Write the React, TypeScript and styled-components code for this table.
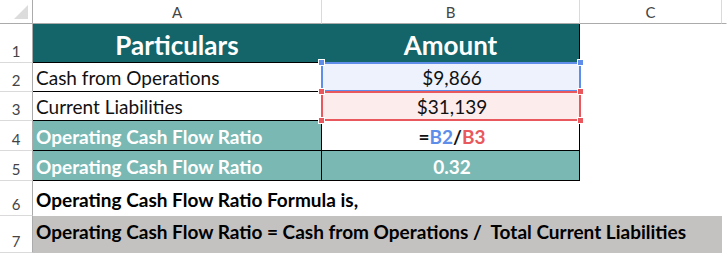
import { Fragment } from "react";
import styled, { createGlobalStyle } from "styled-components";

const GlobalStyle = createGlobalStyle`
  html, body {
    margin: 0;
    padding: 0;
    background: #ffffff;
  }
  body {
    font-family: Lato, "Liberation Sans", sans-serif;
  }
`;

const TEAL_DARK = "#136569";
const TEAL_LIGHT = "#7ab8b3";
const BLUE = "#5f8eea";
const RED = "#e8585c";

const Sheet = styled.div`
  position: relative;
  display: grid;
  grid-template-columns: 33px 289px 258px 142px 1fr;
  grid-template-rows: 24px 39px 29px 29px 30px 30px 35px 37px 1fr;
  width: 727px;
  height: 255px;
  overflow: hidden;
  background: #ffffff;
`;

const Corner = styled.div`
  position: relative;
  border-right: 1px solid #ababab;
  border-bottom: 1px solid #ababab;
  box-sizing: border-box;
  &::after {
    content: "";
    position: absolute;
    right: 4px;
    bottom: 4px;
    width: 0;
    height: 0;
    border-left: 14px solid transparent;
    border-bottom: 14px solid #dcdcdc;
  }
`;

const ColHead = styled.div<{ $last?: boolean }>`
  display: flex;
  align-items: center;
  justify-content: center;
  box-sizing: border-box;
  border-bottom: 1px solid #ababab;
  border-right: 1px solid ${(p) => (p.$last ? "#ffffff" : "#dadada")};
  font-size: 15px;
  color: #444444;
  padding-top: 1px;
`;

const RowHead = styled.div`
  display: flex;
  align-items: flex-end;
  justify-content: center;
  box-sizing: border-box;
  border-right: 1px solid #ababab;
  border-bottom: 1px solid #dadada;
  font-size: 15px;
  color: #444444;
  padding-bottom: 2px;
`;

const TitleCell = styled.div<{ $divider?: boolean }>`
  display: flex;
  align-items: center;
  justify-content: center;
  box-sizing: border-box;
  background: ${TEAL_DARK};
  border-bottom: 1px solid #000000;
  border-right: 1px solid ${(p) => (p.$divider ? TEAL_DARK : "#000000")};
  color: #ffffff;
  font-weight: 700;
  font-size: 26px;
  padding-top: 3px;
`;

const DataCell = styled.div<{ $tone?: "plain" | "teal"; $center?: boolean; $tint?: string }>`
  display: flex;
  align-items: flex-end;
  justify-content: ${(p) => (p.$center ? "center" : "flex-start")};
  box-sizing: border-box;
  padding: 0 0 2px 3px;
  border-right: 1px solid #000000;
  border-bottom: 1px solid #000000;
  background: ${(p) => p.$tint ?? (p.$tone === "teal" ? TEAL_LIGHT : "#ffffff")};
  color: ${(p) => (p.$tone === "teal" ? "#ffffff" : "#111111")};
  font-weight: ${(p) => (p.$tone === "teal" ? 700 : 400)};
  font-size: 19px;
  line-height: 23px;
  white-space: nowrap;
`;

const Blank = styled.div``;

const NoteCell = styled.div<{ $shade?: boolean }>`
  grid-column: 2 / span 3;
  display: flex;
  align-items: ${(p) => (p.$shade ? "flex-start" : "flex-end")};
  box-sizing: border-box;
  padding: ${(p) => (p.$shade ? "4px 0 0 3px" : "0 0 5px 3px")};
  background: ${(p) => (p.$shade ? "#c3c2c1" : "#ffffff")};
  color: #000000;
  font-weight: 700;
  font-size: 19px;
  line-height: 23px;
  white-space: nowrap;
  overflow: visible;
`;

const Formula = styled.span`
  font-weight: 700;
  color: #111111;
`;

const Ref = styled.span<{ $color: string }>`
  color: ${(p) => p.$color};
`;

const Selection = styled.div<{ $color: string; $top: number; $height: number }>`
  position: absolute;
  left: 321px;
  top: ${(p) => p.$top}px;
  width: 260px;
  height: ${(p) => p.$height}px;
  box-sizing: border-box;
  border: 2px solid ${(p) => p.$color};
  pointer-events: none;
`;

const Handle = styled.span<{ $color: string; $x: "l" | "r"; $y: "t" | "b" }>`
  position: absolute;
  width: 7px;
  height: 7px;
  box-sizing: border-box;
  background: ${(p) => p.$color};
  border: 1px solid #ffffff;
  ${(p) => (p.$x === "l" ? "left: -5px;" : "right: -5px;")}
  ${(p) => (p.$y === "t" ? "top: -5px;" : "bottom: -5px;")}
`;

const rows = [
  { n: 2, label: "Cash from Operations", value: "$9,866", tint: "#edf2fc" },
  { n: 3, label: "Current Liabilities", value: "$31,139", tint: "#fcecec" },
];

export default function App() {
  return (
    <>
      <GlobalStyle />
      <Sheet>
        <Corner />
        <ColHead>A</ColHead>
        <ColHead>B</ColHead>
        <ColHead>C</ColHead>
        <ColHead $last />

        <RowHead>1</RowHead>
        <TitleCell $divider>Particulars</TitleCell>
        <TitleCell>Amount</TitleCell>
        <Blank />
        <Blank />

        {rows.map((r) => (
          <Fragment key={r.n}>
            <RowHead>{r.n}</RowHead>
            <DataCell>{r.label}</DataCell>
            <DataCell $center $tint={r.tint}>
              {r.value}
            </DataCell>
            <Blank />
            <Blank />
          </Fragment>
        ))}

        <RowHead>4</RowHead>
        <DataCell $tone="teal">Operating Cash Flow Ratio</DataCell>
        <DataCell $center>
          <Formula>
            =<Ref $color={BLUE}>B2</Ref>/<Ref $color={RED}>B3</Ref>
          </Formula>
        </DataCell>
        <Blank />
        <Blank />

        <RowHead>5</RowHead>
        <DataCell $tone="teal">Operating Cash Flow Ratio</DataCell>
        <DataCell $tone="teal" $center>
          0.32
        </DataCell>
        <Blank />
        <Blank />

        <RowHead>6</RowHead>
        <NoteCell>Operating Cash Flow Ratio Formula is,</NoteCell>
        <Blank />

        <RowHead>7</RowHead>
        <NoteCell $shade>
          Operating Cash Flow Ratio = Cash from Operations /&nbsp; Total Current Liabilities
        </NoteCell>
        <Blank />

        <Selection $color={BLUE} $top={62} $height={30}>
          <Handle $color={BLUE} $x="l" $y="t" />
          <Handle $color={BLUE} $x="r" $y="t" />
        </Selection>
        <Selection $color={RED} $top={91} $height={30}>
          <Handle $color={RED} $x="l" $y="t" />
          <Handle $color={RED} $x="r" $y="t" />
          <Handle $color={RED} $x="l" $y="b" />
          <Handle $color={RED} $x="r" $y="b" />
        </Selection>
      </Sheet>
    </>
  );
}
